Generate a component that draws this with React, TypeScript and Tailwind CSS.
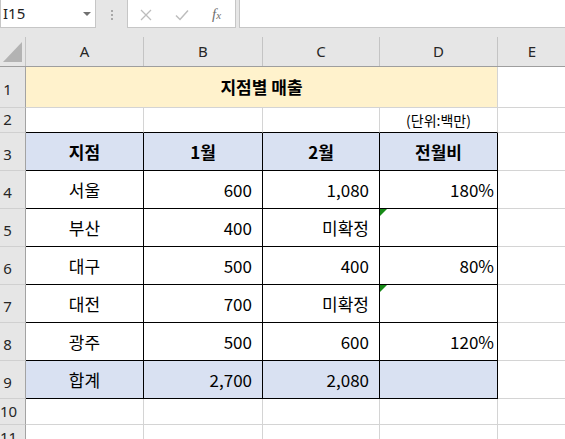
import React from "react";

type Align = "center" | "right" | "rightPct";

interface CellProps {
  w: string;
  children?: React.ReactNode;
  align?: Align;
  tone?: "plain" | "table";
  bg?: string;
  bold?: boolean;
  flag?: boolean;
}

// one worksheet cell: gridline or black border on the right/bottom edge
const Cell = ({ w, children, align = "center", tone = "plain", bg = "", bold = false, flag = false }: CellProps) => {
  const edge = tone === "table" ? "border-black" : "border-[#d4d4d4]";
  const pos =
    align === "center" ? "justify-center" : align === "right" ? "justify-end pr-[10px]" : "justify-end pr-[3px]";
  return (
    <div className={`${w} relative flex h-full shrink-0 items-center border-r border-b ${edge} ${pos} ${bg} ${bold ? "font-bold" : ""}`}>
      {flag && <span className="absolute left-0 top-0 h-0 w-0 border-t-[7px] border-r-[7px] border-t-[#178a17] border-r-transparent" />}
      {children}
    </div>
  );
};

const RowHead = ({ n, pb }: { n: number; pb: string }) => (
  <div className={`flex h-full w-[26px] shrink-0 items-end border-r border-b border-r-[#a3a3a3] border-b-[#d0d0d0] bg-[#e6e6e6] ${pb}`}>
    <span className="w-[15px] text-center font-['Noto_Sans',sans-serif] text-[15px] leading-none text-[#262626]">{n}</span>
  </div>
);

const data = [
  { name: "서울", jan: "600", feb: "1,080", pct: "180%", flag: false },
  { name: "부산", jan: "400", feb: "미확정", pct: "", flag: true },
  { name: "대구", jan: "500", feb: "400", pct: "80%", flag: false },
  { name: "대전", jan: "700", feb: "미확정", pct: "", flag: true },
  { name: "광주", jan: "500", feb: "600", pct: "120%", flag: false },
];

const Toolbar = () => (
  <div className="flex h-[37px] bg-[#e6e6e6]">
    <div className="relative -mt-px flex h-[29px] w-[96px] items-center border border-[#c6c6c6] bg-white pl-[2px] font-['Noto_Sans',sans-serif] text-[15px] text-[#222]">
      I15
      <span className="absolute left-[82px] top-[12px] h-0 w-0 border-x-[4px] border-t-[4px] border-x-transparent border-t-[#707070]" />
    </div>
    <div className="flex w-[31px] flex-col items-center gap-[2px] pt-[10px]">
      <span className="h-[2px] w-[2px] bg-[#a8a8a8]" />
      <span className="h-[2px] w-[2px] bg-[#a8a8a8]" />
      <span className="h-[2px] w-[2px] bg-[#a8a8a8]" />
    </div>
    <div className="relative -mt-px h-[29px] w-[109px] border border-[#c6c6c6] bg-white">
      <svg className="absolute left-[12px] top-[9px]" width="12" height="12" viewBox="0 0 12 12">
        <path d="M1 1 L11 11 M11 1 L1 11" stroke="#bdbdbd" strokeWidth="1.3" fill="none" />
      </svg>
      <svg className="absolute left-[47px] top-[9px]" width="14" height="12" viewBox="0 0 14 12">
        <path d="M1 6.5 L5 10.5 L13 1.5" stroke="#bdbdbd" strokeWidth="1.5" fill="none" />
      </svg>
      <span className="absolute left-[84px] top-[3px] font-['Liberation_Serif',serif] text-[15px] italic text-[#6f6f6f]">
        f<span className="text-[11px]">x</span>
      </span>
    </div>
    <div className="-mt-px ml-[3px] h-[29px] flex-1 border border-r-0 border-[#c6c6c6] bg-white" />
  </div>
);

const ColHeads = () => (
  <div className="flex h-[30px] border-b border-[#9e9e9e] bg-[#e6e6e6] font-['Noto_Sans',sans-serif] text-[15px] text-[#262626]">
    <div className="relative w-[26px] shrink-0 border-r border-[#c4c4c4]">
      <span className="absolute left-[3px] top-[5px] h-0 w-0 border-l-[19px] border-b-[20px] border-l-transparent border-b-[#b3b3b3]" />
    </div>
    {["A", "B", "C", "D"].map((c, i) => (
      <div
        key={c}
        className={`flex shrink-0 items-center justify-center border-r border-[#c4c4c4] ${
          i === 0 ? "w-[118px]" : i === 1 ? "w-[119px]" : i === 2 ? "w-[117px]" : "w-[118px]"
        }`}
      >
        {c}
      </div>
    ))}
    <div className="flex w-[68px] shrink-0 items-center justify-center">E</div>
  </div>
);

export default function App() {
  return (
    <div className="h-[439px] w-[565px] overflow-hidden bg-white">
      <Toolbar />
      <ColHeads />
      <div className="font-['Noto_Sans_CJK_KR',sans-serif] text-[17px] text-black">
        {/* row 1: merged title */}
        <div className="flex h-[41px]">
          <RowHead n={1} pb="pb-[10px]" />
          <div className="flex h-full w-[472px] shrink-0 items-center justify-center border-r border-b border-[#d4d4d4] bg-[#fff2cc] font-bold">
            지점별 매출
          </div>
          <Cell w="w-[68px]" />
        </div>

        {/* row 2: unit note */}
        <div className="flex h-[25px]">
          <RowHead n={2} pb="pb-[5px]" />
          <div className="flex h-full w-[118px] shrink-0 border-r border-b border-r-[#d4d4d4] border-b-black" />
          <div className="flex h-full w-[119px] shrink-0 border-r border-b border-r-[#d4d4d4] border-b-black" />
          <div className="flex h-full w-[117px] shrink-0 border-r border-b border-r-[#d4d4d4] border-b-black" />
          <div className="flex h-full w-[118px] shrink-0 items-center justify-center border-r border-b border-r-[#d4d4d4] border-b-black text-[14px]">
            (단위:백만)
          </div>
          <Cell w="w-[68px]" />
        </div>

        {/* row 3: headings */}
        <div className="flex h-[38px]">
          <RowHead n={3} pb="pb-[8px]" />
          <Cell w="w-[118px]" tone="table" bg="bg-[#d9e1f2]" bold>지점</Cell>
          <Cell w="w-[119px]" tone="table" bg="bg-[#d9e1f2]" bold>1월</Cell>
          <Cell w="w-[117px]" tone="table" bg="bg-[#d9e1f2]" bold>2월</Cell>
          <Cell w="w-[118px]" tone="table" bg="bg-[#d9e1f2]" bold>전월비</Cell>
          <Cell w="w-[68px]" />
        </div>

        {data.map((r, i) => (
          <div key={r.name} className="flex h-[38px]">
            <RowHead n={i + 4} pb="pb-[8px]" />
            <Cell w="w-[118px]" tone="table">{r.name}</Cell>
            <Cell w="w-[119px]" tone="table" align="right">{r.jan}</Cell>
            <Cell w="w-[117px]" tone="table" align="right">{r.feb}</Cell>
            <Cell w="w-[118px]" tone="table" align="rightPct" flag={r.flag}>{r.pct}</Cell>
            <Cell w="w-[68px]" />
          </div>
        ))}

        {/* row 9: totals */}
        <div className="flex h-[38px]">
          <RowHead n={9} pb="pb-[8px]" />
          <Cell w="w-[118px]" tone="table" bg="bg-[#d9e1f2]">합계</Cell>
          <Cell w="w-[119px]" tone="table" bg="bg-[#d9e1f2]" align="right">2,700</Cell>
          <Cell w="w-[117px]" tone="table" bg="bg-[#d9e1f2]" align="right">2,080</Cell>
          <Cell w="w-[118px]" tone="table" bg="bg-[#d9e1f2]" />
          <Cell w="w-[68px]" />
        </div>

        {[10, 11].map((n) => (
          <div key={n} className="flex h-[26px]">
            <RowHead n={n} pb="pb-[5px]" />
            <Cell w="w-[118px]" />
            <Cell w="w-[119px]" />
            <Cell w="w-[117px]" />
            <Cell w="w-[118px]" />
            <Cell w="w-[68px]" />
          </div>
        ))}
      </div>
    </div>
  );
}
